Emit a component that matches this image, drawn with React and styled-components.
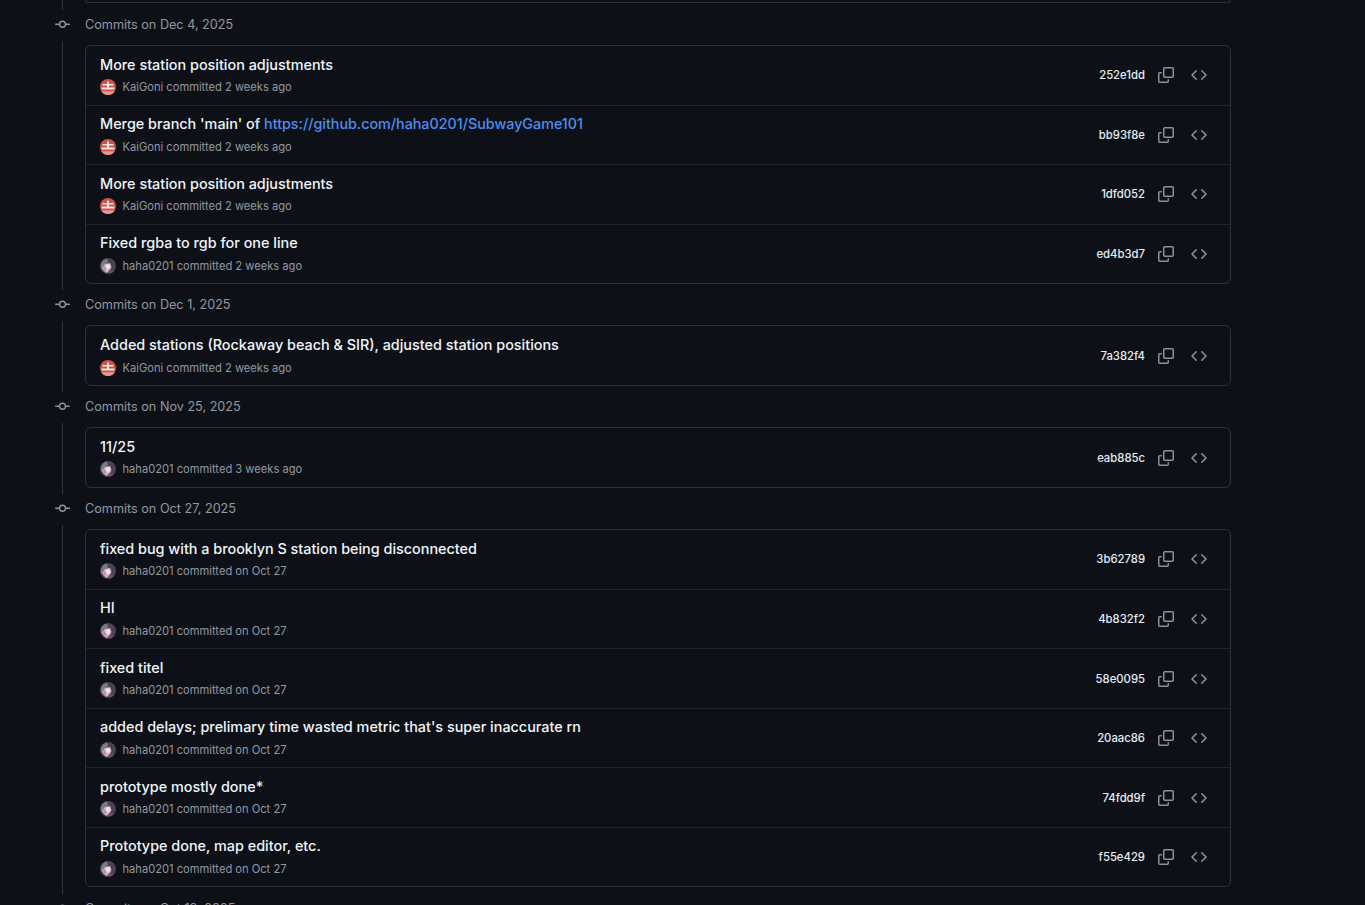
import React from 'react'
import styled, { createGlobalStyle } from 'styled-components'

const GlobalStyle = createGlobalStyle`
  html, body {
    margin: 0;
    height: 100%;
    overflow: hidden;
    background-color: #0d1117;
  }
`

const Page = styled.div`
  height: 905px;
  overflow: hidden;
  padding-left: 54px;
  padding-right: 134px;
  font-family: Inter, 'Liberation Sans', sans-serif;
  color: #f0f6fc;
`

const Rail = styled.div`
  margin-left: 8px;
  padding: 4px 0 6.3px 21.5px;
  border-left: 1.5px solid #30363d;
`

const TopStub = styled(Rail)`
  padding: 0 0 7px 21.5px;
`

const StubCard = styled.div`
  height: 2px;
  border: 1px solid #2d333b;
  border-top: none;
  border-radius: 0 0 6px 6px;
`

const Heading = styled.div`
  height: 31px;
  box-sizing: border-box;
  padding: 0 0 2px 1px;
  display: flex;
  align-items: center;
  gap: 15px;
  font-size: 12.65px;
  color: #9198a1;
`

const Card = styled.div`
  border: 1px solid #2d333b;
  border-radius: 6px;
`

const Row = styled.div`
  height: 59.55px;
  box-sizing: border-box;
  padding: 0 14px 0 14.5px;
  display: flex;
  align-items: center;
  justify-content: space-between;

  &:first-child {
    height: 58.55px;
  }

  & + & {
    border-top: 1px solid #21262d;
  }
`

const Title = styled.div`
  font-size: 14.4px;
  font-weight: 500;
  line-height: 20px;
  color: #f0f6fc;
`

const TitleLink = styled.a`
  font-size: 14.3px;
  color: #4a8fee;
  text-decoration: none;
`

const Meta = styled.div`
  display: flex;
  align-items: center;
  gap: 7px;
  margin-top: 3.5px;
  margin-left: -0.5px;
  font-size: 11.15px;
  line-height: 18px;
  color: #9198a1;
`

const Actions = styled.div`
  display: flex;
  align-items: center;
`

const Hash = styled.span`
  font-size: 11.3px;
  font-weight: 500;
  color: #e6edf3;
`

const IconSlot = styled.span`
  display: flex;
  margin-left: ${(p) => p.$gap}px;
  color: #8b929b;
`

const Dot = () => (
  <svg width="15" height="15" viewBox="0 0 16 16" fill="#9198a1">
    <path d="M11.93 8.5a4.002 4.002 0 0 1-7.86 0H.75a.75.75 0 0 1 0-1.5h3.32a4.002 4.002 0 0 1 7.86 0h3.32a.75.75 0 0 1 0 1.5Zm-1.43-.75a2.5 2.5 0 1 0-5 0 2.5 2.5 0 0 0 5 0Z" />
  </svg>
)

const CopyIcon = () => (
  <svg width="16" height="16" viewBox="0 0 16 16" fill="currentColor">
    <path d="M0 6.75C0 5.784.784 5 1.75 5h1.5a.75.75 0 0 1 0 1.5h-1.5a.25.25 0 0 0-.25.25v7.5c0 .138.112.25.25.25h7.5a.25.25 0 0 0 .25-.25v-1.5a.75.75 0 0 1 1.5 0v1.5A1.75 1.75 0 0 1 9.25 16h-7.5A1.75 1.75 0 0 1 0 14.25Z" />
    <path d="M5 1.75C5 .784 5.784 0 6.75 0h7.5C15.216 0 16 .784 16 1.75v7.5A1.75 1.75 0 0 1 14.25 11h-7.5A1.75 1.75 0 0 1 5 9.25Zm1.75-.25a.25.25 0 0 0-.25.25v7.5c0 .138.112.25.25.25h7.5a.25.25 0 0 0 .25-.25v-7.5a.25.25 0 0 0-.25-.25Z" />
  </svg>
)

const CodeIcon = () => (
  <svg width="16" height="16" viewBox="0 0 16 16" fill="currentColor">
    <path d="m11.28 3.22 4.25 4.25a.75.75 0 0 1 0 1.06l-4.25 4.25a.749.749 0 0 1-1.275-.326.749.749 0 0 1 .215-.734L13.94 8l-3.72-3.72a.749.749 0 0 1 .326-1.275.749.749 0 0 1 .734.215Zm-6.56 0a.751.751 0 0 1 1.042.018.751.751 0 0 1 .018 1.042L2.06 8l3.72 3.72a.749.749 0 0 1-.326 1.275.749.749 0 0 1-.734-.215L.47 8.53a.75.75 0 0 1 0-1.06Z" />
  </svg>
)

const Avatar = ({ user }) =>
  user === 'KaiGoni' ? (
    <svg width="16" height="16" viewBox="0 0 16 16">
      <circle cx="8" cy="8" r="8" fill="#cf5148" />
      <path d="M1.2 12.2h13.6A8 8 0 0 1 1.2 12.2Z" fill="#e59a90" />
      <path d="M7 2.5h2V5h4.5v1.6H9V8.4h5.4v2H1.6v-2H7V6.6H2.5V5H7Z" fill="#f4e9e6" />
    </svg>
  ) : (
    <svg width="16" height="16" viewBox="0 0 16 16">
      <circle cx="8" cy="8" r="8" fill="#4b4352" />
      <path d="M1 6c1-3 3-5 6-5.500L8 4 5 7 1.500 11C.8 9.500.7 7.500 1 6Z" fill="#7d7889" />
      <path d="M2 10l3-4 5-1 1.500 4-2 4-3 2c-2-1-3.500-3-4.500-5Z" fill="#cdb6c0" />
      <path d="M6 6.500l3.500-.5.800 3-1.800 2.500-2.500-1.500Z" fill="#f0e2e2" />
      <path d="M9 12l5 .500-2.500 2.500-3.500.500Z" fill="#6f4f63" />
      <path d="M3 9.500l2-1 1 3-1.500 1Z" fill="#c7838f" />
    </svg>
  )

const groups = [
  {
    date: 'Dec 4, 2025',
    commits: [
      { title: 'More station position adjustments', user: 'KaiGoni', when: '2 weeks ago', sha: '252e1dd' },
      { title: "Merge branch 'main' of ", url: 'https://github.com/haha0201/SubwayGame101', user: 'KaiGoni', when: '2 weeks ago', sha: 'bb93f8e' },
      { title: 'More station position adjustments', user: 'KaiGoni', when: '2 weeks ago', sha: '1dfd052' },
      { title: 'Fixed rgba to rgb for one line', user: 'haha0201', when: '2 weeks ago', sha: 'ed4b3d7' },
    ],
  },
  {
    date: 'Dec 1, 2025',
    commits: [
      { title: 'Added stations (Rockaway beach & SIR), adjusted station positions', user: 'KaiGoni', when: '2 weeks ago', sha: '7a382f4' },
    ],
  },
  {
    date: 'Nov 25, 2025',
    commits: [{ title: '11/25', user: 'haha0201', when: '3 weeks ago', sha: 'eab885c' }],
  },
  {
    date: 'Oct 27, 2025',
    commits: [
      { title: 'fixed bug with a brooklyn S station being disconnected', user: 'haha0201', when: 'on Oct 27', sha: '3b62789' },
      { title: 'HI', user: 'haha0201', when: 'on Oct 27', sha: '4b832f2' },
      { title: 'fixed titel', user: 'haha0201', when: 'on Oct 27', sha: '58e0095' },
      { title: "added delays; prelimary time wasted metric that's super inaccurate rn", user: 'haha0201', when: 'on Oct 27', sha: '20aac86' },
      { title: 'prototype mostly done*', user: 'haha0201', when: 'on Oct 27', sha: '74fdd9f' },
      { title: 'Prototype done, map editor, etc.', user: 'haha0201', when: 'on Oct 27', sha: 'f55e429' },
    ],
  },
]

const CommitRow = ({ commit }) => (
  <Row>
    <div>
      <Title>
        {commit.title}
        {commit.url && <TitleLink href="#">{commit.url}</TitleLink>}
      </Title>
      <Meta>
        <Avatar user={commit.user} />
        <span>
          {commit.user} committed {commit.when}
        </span>
      </Meta>
    </div>
    <Actions>
      <Hash>{commit.sha}</Hash>
      <IconSlot $gap={13}>
        <CopyIcon />
      </IconSlot>
      <IconSlot $gap={17}>
        <CodeIcon />
      </IconSlot>
      <IconSlot $gap={9} />
    </Actions>
  </Row>
)

const App = () => (
  <Page>
    <GlobalStyle />
    <TopStub>
      <StubCard />
    </TopStub>
    {groups.map((group) => (
      <section key={group.date}>
        <Heading>
          <Dot />
          <span>Commits on {group.date}</span>
        </Heading>
        <Rail>
          <Card>
            {group.commits.map((commit) => (
              <CommitRow key={commit.sha} commit={commit} />
            ))}
          </Card>
        </Rail>
      </section>
    ))}
    <Heading>
      <Dot />
      <span>Commits on Oct 19, 2025</span>
    </Heading>
  </Page>
)

export default App
